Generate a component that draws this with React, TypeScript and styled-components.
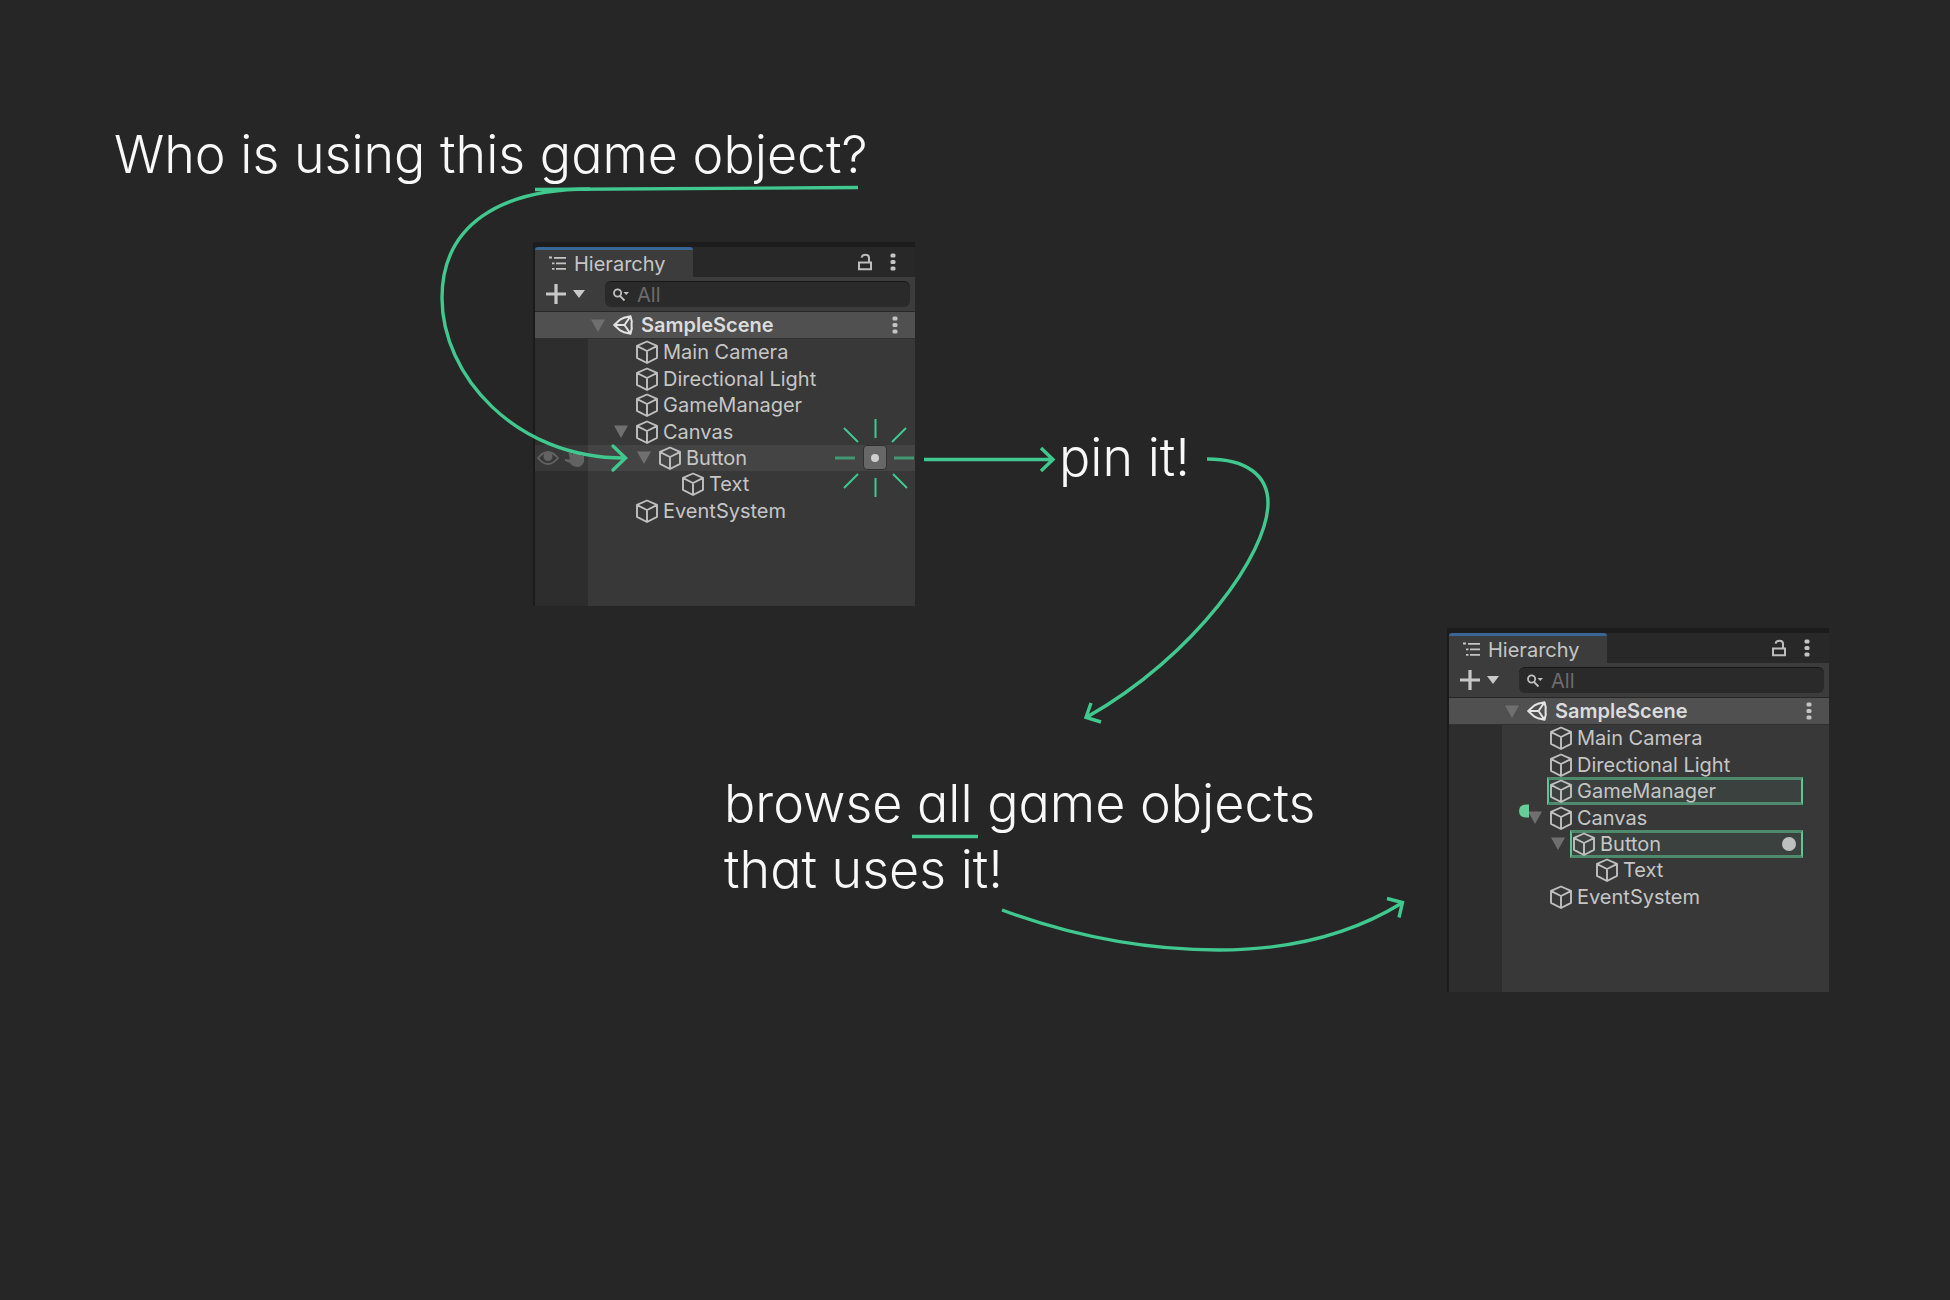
import React from "react";
import styled, { createGlobalStyle } from "styled-components";

const green = "#40c88f";

const GlobalStyle = createGlobalStyle`
  *, *::before, *::after { box-sizing: border-box; }
  body { margin: 0; background: #262626; }
  button, input { font: inherit; color: inherit; }
`;

const Canvas = styled.main`
  position: relative;
  min-height: 100vh;
  overflow: hidden;
  background: #262626;
  color: #f8f8f8;
  font-family: Inter, "Open Sans", sans-serif;
`;

const Node = styled.div<{ $x: number; $y: number }>`
  position: absolute;
  left: ${(p) => p.$x}px;
  top: ${(p) => p.$y}px;
`;

const Caption = styled.p`
  margin: 0;
  font-size: 52px;
  font-weight: 300;
  line-height: 66px;
  font-feature-settings: "cv11" 1;
  white-space: nowrap;
`;

const Connectors = styled.svg`
  position: absolute;
  left: 0;
  top: 0;
  pointer-events: none;
`;

const Panel = styled.section`
  width: 382px;
  border-top: 5px solid #1c1c1c;
  border-left: 2px solid #1b1b1b;
  background: #383838;
  color: #c6c6c6;
  font-size: 20px;
  line-height: 24px;
`;

const TabBar = styled.header`
  display: flex;
  justify-content: space-between;
  height: 30px;
  background: #282828;
`;

const Tab = styled.button`
  display: flex;
  align-items: center;
  gap: 7px;
  width: 158px;
  padding: 0 0 0 14px;
  border: 0;
  border-top: 3px solid #3a6595;
  border-radius: 3px 3px 0 0;
  background: #3c3c3c;
`;

const TabActions = styled.div`
  display: flex;
  align-items: center;
  gap: 17px;
  padding-right: 19px;
`;

const IconButton = styled.button`
  display: flex;
  align-items: center;
  justify-content: center;
  flex: none;
  padding: 0;
  border: 0;
  background: none;
`;

const Toolbar = styled.div`
  display: flex;
  align-items: center;
  justify-content: space-between;
  height: 35px;
  padding: 0 5px 0 11px;
  border-bottom: 1px solid #272727;
  background: #3c3c3c;
`;

const SearchField = styled.label`
  display: flex;
  align-items: center;
  gap: 8px;
  width: 305px;
  height: 26px;
  padding-left: 8px;
  border-top: 1px solid #171717;
  border-radius: 6px;
  background: #2a2a2a;
`;

const SearchInput = styled.input`
  flex: 1;
  min-width: 0;
  padding: 0;
  border: 0;
  outline: 0;
  background: none;
  &::placeholder { color: #6c6c6c; opacity: 1; }
`;

const SceneRow = styled.div`
  display: flex;
  align-items: center;
  gap: 8px;
  height: 27px;
  padding: 0 17px 0 56px;
  border-bottom: 1px solid #303030;
  background: #505050;
  color: #dcdcdc;
`;

const SceneName = styled.strong`
  flex: 1;
  font-weight: 600;
`;

const Tree = styled.div`
  height: 267px;
  background: linear-gradient(to right, #2d2d2d 53px, #383838 53px);
`;

const Rows = styled.ul`
  display: grid;
  grid-template-rows: repeat(7, minmax(0, 1fr));
  height: 185px;
  margin: 0;
  padding: 0;
  list-style: none;
`;

const Row = styled.li<{ $hover?: boolean }>`
  display: flex;
  align-items: center;
  min-height: 0;
  background: ${(p) => (p.$hover ? "linear-gradient(to right, #383838 53px, #444444 53px)" : "none")};
`;

const Gutter = styled.div`
  display: flex;
  align-items: center;
  gap: 6px;
  flex: none;
  width: 53px;
  padding-left: 2px;
`;

const Indent = styled.div<{ $depth: number }>`
  display: flex;
  justify-content: flex-end;
  flex: none;
  width: ${(p) => 45 + p.$depth * 23}px;
  padding-right: 5px;
`;

const Item = styled.div<{ $marked?: boolean }>`
  display: flex;
  align-items: center;
  align-self: stretch;
  flex: 1;
  gap: 4px;
  margin: ${(p) => (p.$marked ? "-1px" : "0")} 26px ${(p) => (p.$marked ? "-1px" : "0")} 0;
  border-style: solid;
  border-width: 3px 2px;
  border-color: ${(p) => (p.$marked ? "#508a6d #62c494" : "transparent")};
  background: ${(p) => (p.$marked ? "#3a413e" : "none")};
`;

const ItemName = styled.span`
  flex: 1;
  white-space: nowrap;
`;

const UseDot = styled.i`
  width: 14px;
  height: 14px;
  margin-right: 5px;
  border-radius: 50%;
  background: #bcc0be;
`;

const PinButton = styled.button`
  display: flex;
  align-items: center;
  justify-content: center;
  flex: none;
  width: 24px;
  height: 25px;
  padding: 0;
  border: 1px solid #303030;
  border-radius: 4px;
  background: #676767;
`;

const PinDot = styled.i`
  width: 8px;
  height: 8px;
  border-radius: 50%;
  background: #cfcfcf;
`;

const Glyph = styled.svg`
  flex: none;
  display: block;
`;

const Cube = () => (
  <Glyph width="24" height="24" viewBox="0 0 24 24" fill="none" stroke="#c0c0c0" strokeWidth="1.9" strokeLinejoin="round">
    <path d="M12 1.500 22 5.800V17.800L12 23 2 17.800V5.800ZM2.200 6.200 12 11 21.800 6.200M12 11V22.600" />
  </Glyph>
);

const Triangle = () => (
  <Glyph width="14" height="13" viewBox="0 0 14 13" fill="#6f6f6f"><path d="M0 0.500H14L7 13Z" /></Glyph>
);

const Kebab = () => (
  <Glyph width="6" height="18" viewBox="0 0 6 18" fill="#c4c4c4">
    <rect x="0.500" y="0.500" width="5" height="4" rx="1.500" />
    <rect x="0.500" y="7" width="5" height="4" rx="1.500" />
    <rect x="0.500" y="13.500" width="5" height="4" rx="1.500" />
  </Glyph>
);

const ListIcon = () => (
  <Glyph width="18" height="15" viewBox="0 0 18 15" stroke="#c4c4c4" strokeWidth="1.800">
    <path d="M0 1.500H3M5 1.800H17M3 7.300H5.500M7 7.300H17M3 12.800H5.500M7 12.800H17" />
  </Glyph>
);

const LockIcon = () => (
  <Glyph width="16" height="18" viewBox="0 0 16 18" fill="none" stroke="#bdbdbd" strokeWidth="2">
    <path d="M2 9.500H14V16.200H2ZM12 9.500V5Q12 1.800 8.500 1.800Q5 1.800 4.600 4.600" />
  </Glyph>
);

const AddIcon = () => (
  <Glyph width="40" height="22" viewBox="0 0 40 22">
    <path d="M0 11H20M10 1V21" stroke="#c8c8c8" strokeWidth="3.200" />
    <path d="M27 7H39L33 15Z" fill="#c8c8c8" />
  </Glyph>
);

const SearchIcon = () => (
  <Glyph width="16" height="14" viewBox="0 0 16 14" fill="none" stroke="#c0c0c0" strokeWidth="1.800">
    <circle cx="4.600" cy="5" r="3.600" />
    <path d="m7 8 4.500 4.500" />
    <path d="M10.500 4H16L13.200 7Z" fill="#c0c0c0" stroke="none" />
  </Glyph>
);

const SceneIcon = () => (
  <Glyph width="20" height="20" viewBox="0 0 20 20" fill="none" stroke="#e4e4e4" strokeWidth="2" strokeLinejoin="round">
    <path d="M10 3 17.500 1.200 19 7.500M19 12.500 17.500 18.800 10 17M7.200 4.500 1.200 10 7.200 15.500M11.500 10H3M11.500 10 17 2M11.500 10 17 18M7.200 4.500 12 2.400M7.200 15.500 12 17.600M18.600 7V13" />
  </Glyph>
);

const EyeIcon = () => (
  <Glyph width="22" height="14" viewBox="0 0 22 14" fill="none" stroke="#626262" strokeWidth="1.800">
    <path d="M1 7Q11 -5 21 7Q11 19 1 7Z" /><circle cx="11" cy="5.500" r="4.500" fill="#626262" stroke="none" />
  </Glyph>
);

const HandIcon = () => (
  <Glyph width="20" height="18" viewBox="0 0 20 18" fill="#626262">
    <path d="M0 10 5 10.500 3.500 4 6 3 8 6 8.500 2.500 11.500 2.500 12 5 14 3.500 16 5 16.500 7 19 6V13Q17 18 12 18Q7 17.500 5 14L0 12Z" />
  </Glyph>
);

type Entry = { name: string; depth: number; open?: boolean };

const entries: Entry[] = [
  { name: "Main Camera", depth: 0 },
  { name: "Directional Light", depth: 0 },
  { name: "GameManager", depth: 0 },
  { name: "Canvas", depth: 0, open: true },
  { name: "Button", depth: 1, open: true },
  { name: "Text", depth: 2 },
  { name: "EventSystem", depth: 0 },
];

type HierarchyProps = { hovered?: string; users?: string[]; pinned?: string };

const Hierarchy = ({ hovered, users = [], pinned }: HierarchyProps) => (
  <Panel>
    <TabBar>
      <Tab><ListIcon />Hierarchy</Tab>
      <TabActions>
        <IconButton aria-label="Lock"><LockIcon /></IconButton>
        <IconButton aria-label="Panel menu"><Kebab /></IconButton>
      </TabActions>
    </TabBar>
    <Toolbar>
      <IconButton aria-label="Create"><AddIcon /></IconButton>
      <SearchField>
        <SearchIcon />
        <SearchInput aria-label="Search" placeholder="All" />
      </SearchField>
    </Toolbar>
    <SceneRow>
      <IconButton aria-label="Collapse SampleScene"><Triangle /></IconButton>
      <SceneIcon />
      <SceneName>SampleScene</SceneName>
      <IconButton aria-label="Scene menu"><Kebab /></IconButton>
    </SceneRow>
    <Tree>
      <Rows>
        {entries.map(({ name, depth, open }) => (
          <Row key={name} $hover={name === hovered}>
            <Gutter>{name === hovered && <><EyeIcon /><HandIcon /></>}</Gutter>
            <Indent $depth={depth}>
              {open && <IconButton aria-label={`Collapse ${name}`}><Triangle /></IconButton>}
            </Indent>
            <Item $marked={users.includes(name)}>
              <Cube />
              <ItemName>{name}</ItemName>
              {name === pinned && <UseDot />}
              {name === hovered && <PinButton aria-label={`Pin ${name}`}><PinDot /></PinButton>}
            </Item>
          </Row>
        ))}
      </Rows>
    </Tree>
  </Panel>
);

export default function App() {
  return (
    <Canvas>
      <GlobalStyle />
      <Node $x={114} $y={122}>
        <Caption as="h1">Who is using this game object?</Caption>
      </Node>
      <Node $x={533} $y={242}>
        <Hierarchy hovered="Button" />
      </Node>
      <Node $x={1059} $y={425}>
        <Caption>pin it!</Caption>
      </Node>
      <Node $x={724} $y={771}>
        <Caption>browse all game objects<br />that uses it!</Caption>
      </Node>
      <Node $x={1447} $y={628}>
        <Hierarchy users={["GameManager", "Button"]} pinned="Button" />
      </Node>
      <Connectors width="1950" height="1300" viewBox="0 0 1950 1300" fill="none" stroke={green} strokeWidth="3.4">
        <path d="M535 189.500 858 187.500M912 836.500H978" />
        <path d="M590 189C500 189 442 225 442 298C442 375 515 458 624 458" />
        <path d="M613 446 625.500 458 613 470" strokeLinecap="round" />
        <path d="M924 459.500H1053M1041 448 1053 459.500 1041 471" />
        <path d="M1207 459C1246 459 1268 475 1268 503C1268 553 1195 656 1087 717" />
        <path d="M1091 703 1086 717.500 1101 722" />
        <path d="M1002 910C1075 937 1150 950 1219 950C1290 950 1350 935 1402 903" />
        <path d="M1387 898.500 1402.500 902.500 1399 917.500" />
        <g strokeWidth="2">
          <path d="M875.500 419V438M875.500 478V497M844 428 858 442M906 428 892 442M844 488 858 474M907 488 893 474" />
          <path d="M835 458H855M894 458H914" opacity="0.65" strokeWidth="3" />
        </g>
        <path d="M1529 804.500V817.500Q1519 818.500 1519 811Q1519 803.500 1529 804.500Z" fill="#68cc99" stroke="none" />
      </Connectors>
    </Canvas>
  );
}
